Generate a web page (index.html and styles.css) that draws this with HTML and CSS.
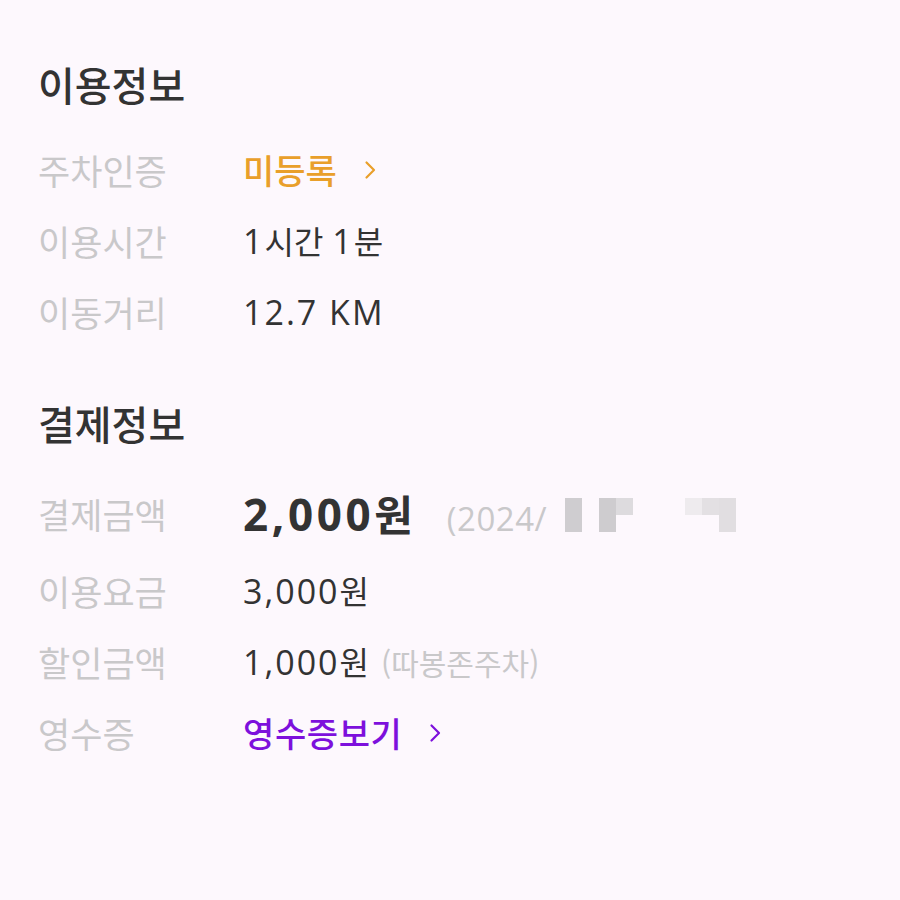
FILE: index.html
```html
<!DOCTYPE html>
<html lang="ko">
<head>
<meta charset="utf-8">
<link rel="stylesheet" href="styles.css">
</head>
<body>
<div class="page">
  <section class="section">
    <h2 class="title">이용정보</h2>
    <div class="rows">
      <div class="row">
        <span class="label">주차인증</span>
        <span class="value link orange">미등록<svg class="chev" viewBox="0 0 14 22" width="14" height="22"><path d="M3.5 3.5 L11 11 L3.5 18.5" fill="none" stroke="currentColor" stroke-width="2.2" stroke-linecap="round" stroke-linejoin="round"/></svg></span>
      </div>
      <div class="row">
        <span class="label">이용시간</span>
        <span class="value"><span class="num">1</span>시간 <span class="num">1</span>분</span>
      </div>
      <div class="row">
        <span class="label">이동거리</span>
        <span class="value"><span class="num">12.7 KM</span></span>
      </div>
    </div>
  </section>
  <section class="section second">
    <h2 class="title">결제정보</h2>
    <div class="rows">
      <div class="row big">
        <span class="label">결제금액</span>
        <span class="value"><span class="amount"><span class="num">2,000</span>원</span><span class="date">(2024/</span><span class="blur"><i class="b b1"></i><i class="b b2"></i><i class="b b3"></i><i class="b b4"></i><i class="b b5"></i><i class="b b6"></i></span></span>
      </div>
      <div class="row">
        <span class="label">이용요금</span>
        <span class="value"><span class="num">3,000</span>원</span>
      </div>
      <div class="row">
        <span class="label">할인금액</span>
        <span class="value"><span class="num">1,000</span>원<span class="note">(따봉존주차)</span></span>
      </div>
      <div class="row">
        <span class="label">영수증</span>
        <span class="value link purple">영수증보기<svg class="chev" viewBox="0 0 14 22" width="14" height="22"><path d="M3.5 3.5 L11 11 L3.5 18.5" fill="none" stroke="currentColor" stroke-width="2.2" stroke-linecap="round" stroke-linejoin="round"/></svg></span>
      </div>
    </div>
  </section>
</div>
</body>
</html>
```
FILE: styles.css
```css
html, body {
  margin: 0;
  padding: 0;
  background: #fdf8fd;
}
body {
  font-family: "Noto Sans CJK KR", "Noto Sans", sans-serif;
  color: #333333;
}
.page {
  padding: 60px 0 0 38px;
}
.title {
  margin: 0;
  font-size: 40px;
  font-weight: 500;
  line-height: 48px;
  color: #333333;
}
.rows {
  margin-top: 26px;
}
.second {
  margin-top: 52px;
}
.second .rows {
  margin-top: 24px;
}
.row {
  display: grid;
  grid-template-columns: 205px 1fr;
  align-items: center;
  height: 71px;
}
.row.big {
  height: 84px;
}
.label {
  font-size: 35px;
  color: #c9c8ca;
}
.value {
  display: block;
  font-size: 32px;
  color: #333333;
  white-space: nowrap;
}
.num {
  font-family: "Open Sans", "Noto Sans CJK KR", sans-serif;
  font-size: 34px;
  letter-spacing: 2px;
}
.link {
  display: flex;
  align-items: center;
  font-weight: 500;
  font-size: 34px;
}
.orange {
  color: #e99f2a;
}
.purple {
  color: #7d10dc;
  letter-spacing: 0.6px;
}
.chev {
  margin-left: 26px;
}
.amount {
  font-size: 42px;
  font-weight: 700;
  color: #333333;
}
.amount .num {
  font-size: 44px;
  font-weight: 700;
  letter-spacing: 3.6px;
}
.date {
  margin-left: 34px;
  font-family: "Open Sans", sans-serif;
  font-size: 33px;
  letter-spacing: 0.5px;
  color: #c9c8ca;
}
.blur {
  display: inline-flex;
  align-items: flex-start;
  vertical-align: -1px;
  margin-left: 18px;
  height: 34px;
}
.b {
  display: block;
}
.b1 { width: 17px; height: 34px; background: #cfcdd0; }
.b2 { width: 17px; height: 34px; background: #cecccf; margin-left: 17px; }
.b3 { width: 17px; height: 17px; background: #dddbde; }
.b4 { width: 17px; height: 17px; background: #eeebee; margin-left: 52px; }
.b5 { width: 17px; height: 17px; background: #e3e0e3; }
.b6 { width: 17px; height: 34px; background: #e1dee1; }
.note {
  margin-left: 12px;
  font-size: 30px;
  color: #c9c8ca;
}
```
